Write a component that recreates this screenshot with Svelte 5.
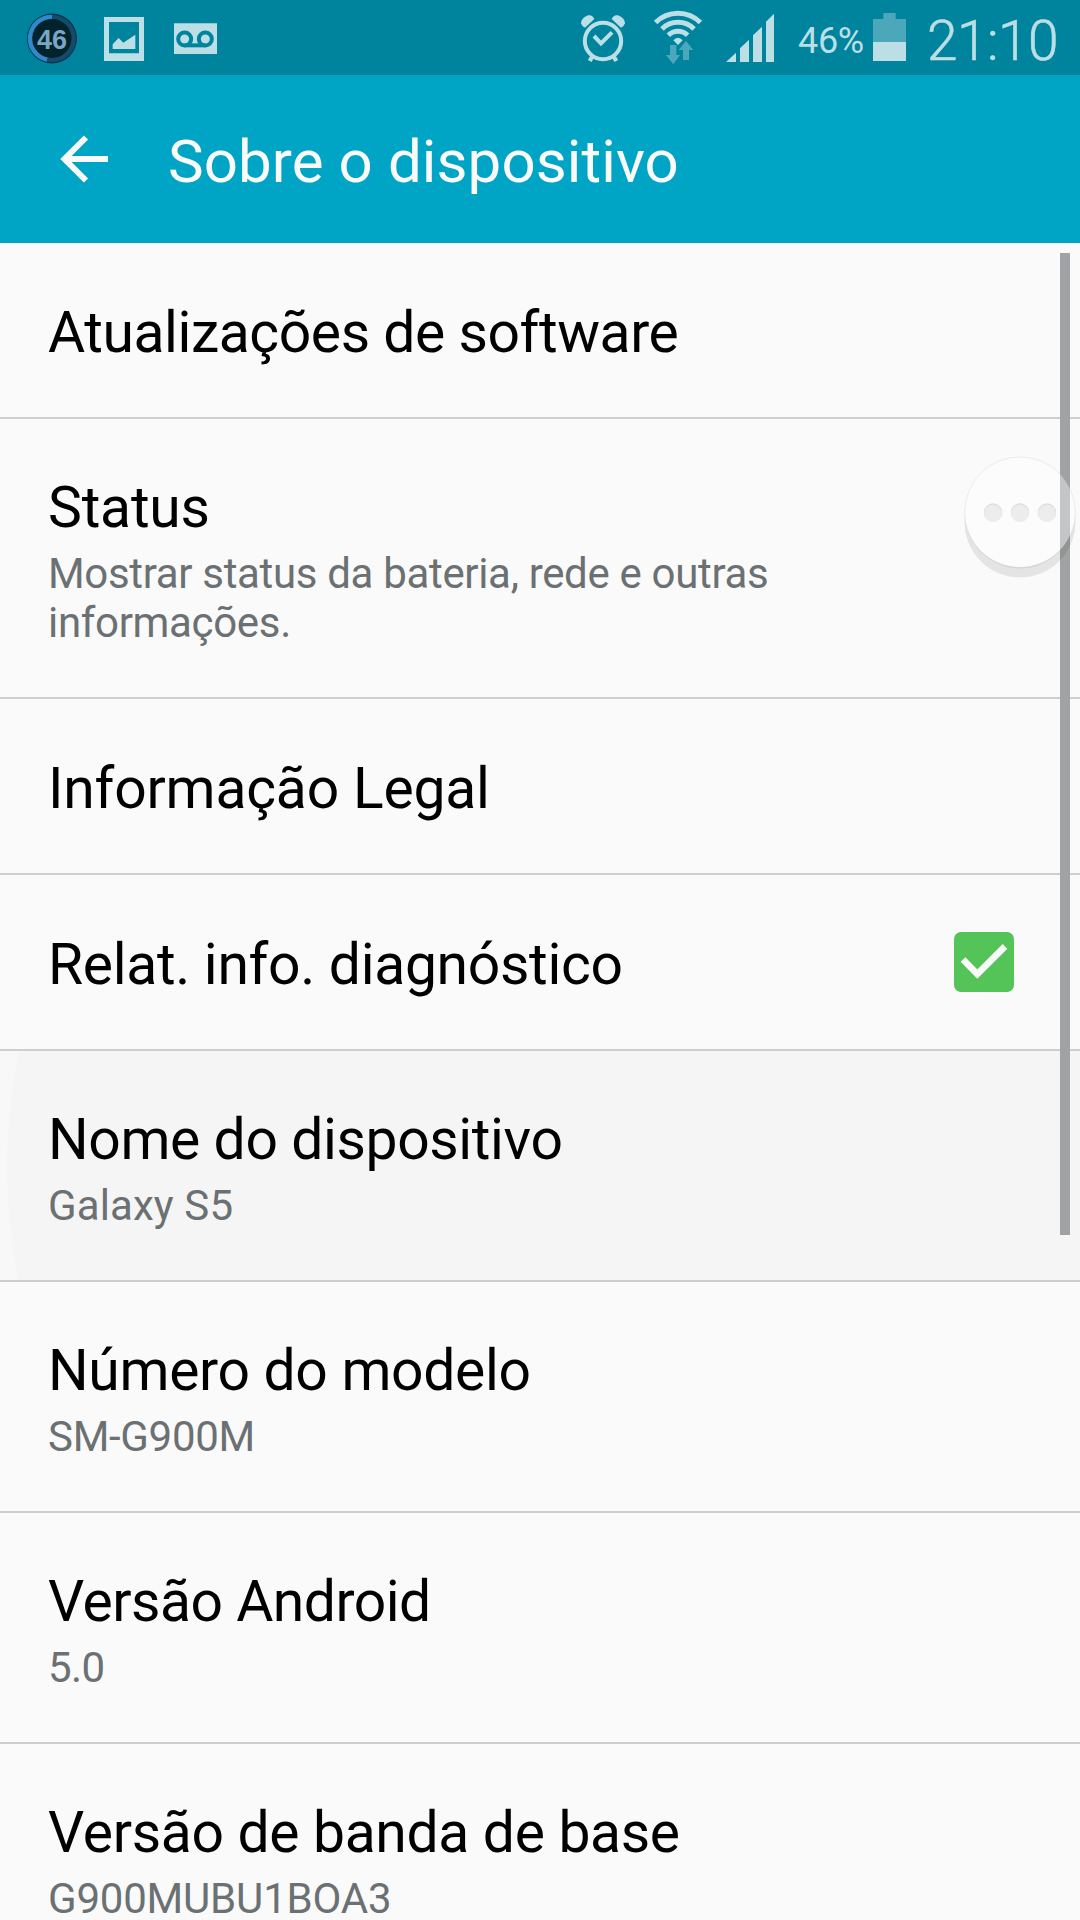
<script>
  // tracking and subTracking are letter spacings in px
  const rows = [
    { title: 'Atualizações de software', tracking: -0.43 },
    {
      title: 'Status',
      tracking: -0.2,
      sub: 'Mostrar status da bateria, rede e outras informações.',
      subTracking: -0.33
    },
    { title: 'Informação Legal', tracking: -0.2 },
    { title: 'Relat. info. diagnóstico', tracking: -0.31, checked: true },
    { title: 'Nome do dispositivo', tracking: -0.38, sub: 'Galaxy S5', subTracking: 0.1, pressed: true },
    { title: 'Número do modelo', tracking: -0.31, sub: 'SM-G900M', subTracking: -0.3 },
    { title: 'Versão Android', tracking: -0.5, sub: '5.0', subTracking: -0.6 },
    { title: 'Versão de banda de base', tracking: -0.32, sub: 'G900MUBU1BOA3', subTracking: -0.2 }
  ];
</script>

<div class="screen">
  <div class="status">
    <svg class="badge" width="50" height="75" viewBox="81 0 150 225">
      <circle cx="156" cy="115.500" r="75" fill="#06344a" />
      <circle cx="156" cy="115.500" r="65" fill="#02222c" stroke="#144a6b" stroke-width="13" />
      <path d="M156 50.500A65 65 0 0 0 141 179" fill="none" stroke="#3189cb" stroke-width="13" />
      <text x="156" y="146" text-anchor="middle" textLength="90" lengthAdjust="spacingAndGlyphs">46</text>
    </svg>
    <svg class="picture" width="40" height="75" viewBox="312 0 120 225">
      <path fill="#bbdfe5" fill-rule="evenodd" d="M312 51h120v132H312zM327 66v94h90V66z" />
      <path fill="#bbdfe5" d="M338 147v-14l18-19 14 14 36-24v43z" />
    </svg>
    <svg class="voicemail" width="43" height="75" viewBox="525 0 129 225">
      <path fill="#bbdfe5" d="M525 70h129v92H525z" />
      <g fill="none" stroke="#00849e" stroke-width="12">
        <circle cx="557" cy="117" r="19.500" />
        <circle cx="619" cy="117" r="19.500" />
        <path d="M557 136h62" />
      </g>
    </svg>
    <div class="spacer"></div>
    <svg class="alarm" width="44" height="75" viewBox="63 0 132 225">
      <g fill="none" stroke="#bbdfe5" stroke-width="12">
        <circle cx="129" cy="123" r="54.500" />
        <path d="M102 108l21 22 33-33" />
        <path d="M98 168l-9 15M160 168l9 15" stroke-width="13" />
      </g>
      <path fill="#bbdfe5" d="M75 83L103 57Q97 43 84 46Q64 54 63 70Q65 78 75 83z" />
      <path fill="#bbdfe5" d="M183 83L155 57Q161 43 174 46Q194 54 195 70Q193 78 183 83z" />
    </svg>
    <svg class="wifi" width="50" height="75" viewBox="279 0 150 225">
      <g fill="none" stroke="#bbdfe5" stroke-width="15">
        <path d="M286.800 67.800A95 95 0 0 1 421.200 67.800" />
        <path d="M305.900 86.900A68 68 0 0 1 402.100 86.900" />
        <path d="M325 106A41 41 0 0 1 383 106" />
      </g>
      <path fill="#bbdfe5" d="M354 135L340 121Q354 106 368 121z" />
      <path fill="#4ca7ba" d="M330 135h19v30h11l-20 28-22-28h12zM378 123l22 27h-13v30h-18v-30h-13z" />
    </svg>
    <svg class="signal" width="48" height="75" viewBox="498 0 144 225">
      <path fill="#bbdfe5" d="M498 186l30-28v28zM540 186v-41l27-26v67zM579 186v-80l27-26v106zM618 186V65l24-24v145z" />
    </svg>
    <span class="percent">46%</span>
    <svg class="battery" width="33" height="75" viewBox="279 0 99 225">
      <path fill="#4ca7ba" d="M279 57h31V39h37v18h31v70h-99z" />
      <path fill="#bbdfe5" d="M279 126h99v57h-99z" />
    </svg>
    <span class="clock">21:10</span>
  </div>

  <header>
    <svg class="back" width="48" height="48" viewBox="0 0 48 48">
      <path d="M26 2.500L4.500 24 26 45.500M4 24h44" fill="none" stroke="#fafafa" stroke-width="6" />
    </svg>
    <h1>Sobre o dispositivo</h1>
  </header>

  <main>
    {#each rows as row}
      <div class="row" class:single={!row.sub} class:pressed={row.pressed}>
        <div class="texts">
          <div class="title" style:letter-spacing="{row.tracking}px">{row.title}</div>
          {#if row.sub}
            <div class="sub" style:letter-spacing="{row.subTracking}px">{row.sub}</div>
          {/if}
        </div>
        {#if row.checked}
          <svg class="check" width="60" height="60" viewBox="0 0 60 60">
            <rect width="60" height="60" rx="7" fill="#54c459" />
            <path d="M9 27.500L23.300 42 51 14.300" fill="none" stroke="#fafafa" stroke-width="6.600" />
          </svg>
        {/if}
      </div>
    {/each}
  </main>

  <div class="scrollbar"></div>
  <svg class="floating" width="114" height="124" viewBox="963 455 114 124">
    <path d="M964.500 512v10a55.500 55.500 0 0 0 111 0v-10a55.500 55.500 0 0 1-111 0z" fill="#000" fill-opacity=".085" />
    <path d="M964.500 512a55.500 56.500 0 0 0 111 0a55.500 55 0 0 1-111 0z" fill="#000" fill-opacity=".06" />
    <circle cx="1020" cy="512.200" r="55.300" fill="#fff" fill-opacity=".38" stroke="#000" stroke-opacity=".08" stroke-width=".9" />
    {#each [993, 1020, 1047] as x}
      <circle cx={x} cy="512.400" r="9.200" fill="#dcdcdc" />
      <circle cx={x} cy="513.200" r="8.800" fill="#ececec" />
    {/each}
  </svg>
</div>

<style>
  :global(body) {
    background: #fafafa;
  }
  .screen {
    position: relative;
    width: 1080px;
    height: 1920px;
    overflow: hidden;
    background: #fafafa;
    font-family: Roboto, sans-serif;
  }
  svg {
    display: block;
    flex: none;
  }
  .status {
    display: flex;
    box-sizing: border-box;
    height: 75px;
    padding: 0 20px 0 27px;
    background: #00849e;
    color: #bbdfe5;
  }
  .badge text {
    font: bold 82px "Liberation Sans", sans-serif;
    fill: #7ba5c4;
  }
  .picture { margin-left: 27px; }
  .voicemail { margin-left: 30px; }
  .spacer { flex: 1; }
  .wifi { margin-left: 28px; }
  .signal { margin-left: 23px; }
  .percent {
    width: 75px;
    margin-left: 24px;
    padding-top: 4px;
    font-size: 36px;
    line-height: 75px;
    height: 71px;
    letter-spacing: -0.3px;
  }
  .clock {
    width: 133px;
    margin-left: 21px;
    padding-top: 4px;
    font-size: 55px;
    line-height: 75px;
    height: 71px;
    font-weight: 300;
    letter-spacing: -0.5px;
    -webkit-text-stroke: 0.6px #bbdfe5;
  }
  header {
    display: flex;
    align-items: center;
    box-sizing: border-box;
    height: 168px;
    padding-left: 60px;
    background: #00a5c6;
    color: #fafafa;
  }
  h1 {
    margin: 5px 0 0 60px;
    font-size: 60px;
    line-height: 70px;
    font-weight: 400;
    letter-spacing: 0.1px;
    white-space: nowrap;
  }
  .row {
    position: relative;
    display: flex;
    align-items: center;
    justify-content: space-between;
    box-sizing: border-box;
    overflow: hidden;
    height: 231px;
    padding: 0 66px 0 48px;
    border-bottom: 2px solid #cecece;
  }
  .row:nth-child(2) { height: 280px; }
  .row.single { height: 176px; }
  .texts {
    position: relative;
    align-self: flex-start;
    width: 760px;
    padding-top: 55px;
  }
  .single .texts { padding-top: 56px; }
  .title {
    color: #000;
    font-size: 57px;
    line-height: 67px;
    white-space: nowrap;
  }
  .sub {
    margin-top: 8px;
    color: #6b7073;
    font-size: 42px;
    line-height: 49px;
  }
  .row:last-child .sub {
    margin-top: 12px;
    line-height: 42px;
  }
  .pressed { background: #f8f8f8; }
  /* touch ripple spreading across the pressed row */
  .pressed::before {
    content: "";
    position: absolute;
    left: 7px;
    top: -460px;
    width: 1150px;
    height: 1150px;
    border-radius: 50%;
    background: #f5f5f5;
  }
  .scrollbar {
    position: absolute;
    top: 253px;
    right: 10px;
    width: 10px;
    height: 982px;
    background: #a1a2a3;
  }
  .floating {
    position: absolute;
    left: 963px;
    top: 455px;
  }
</style>
